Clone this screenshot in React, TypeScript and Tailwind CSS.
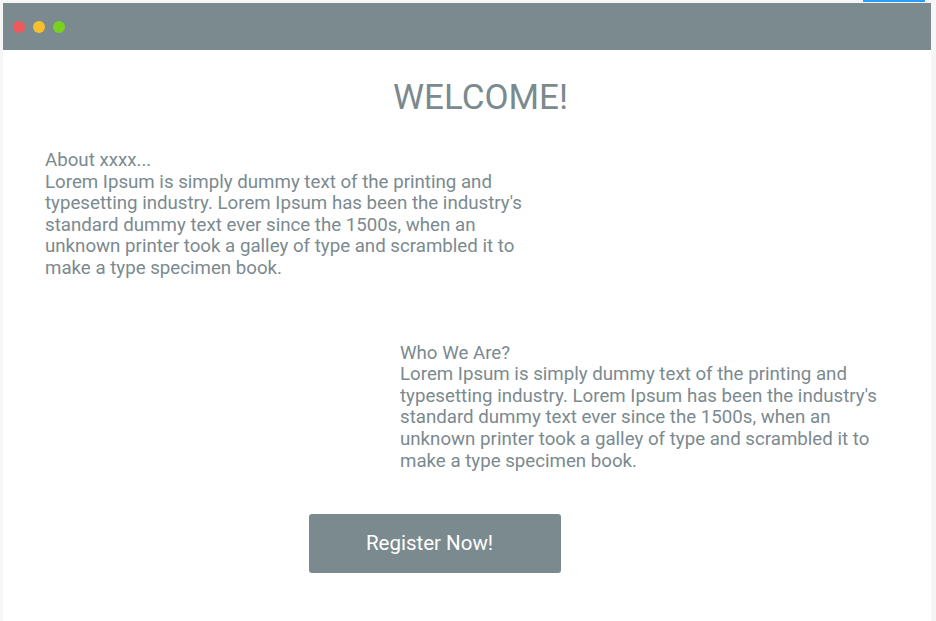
import React from 'react';

const lorem =
  "Lorem Ipsum is simply dummy text of the printing and typesetting industry. Lorem Ipsum has been the industry's standard dummy text ever since the 1500s, when an unknown printer took a galley of type and scrambled it to make a type specimen book.";

function Section({ title, className }: { title: string; className: string }) {
  return (
    <div className={`w-[505px] text-[18.7px] leading-[21.6px] text-[#7b8a8f] ${className}`}>
      <p>{title}</p>
      <p>{lorem}</p>
    </div>
  );
}

export default function App() {
  return (
    <div
      className="relative h-[621px] w-[936px] overflow-hidden bg-[#f6f6f6] pl-[3px] pt-[3px]"
      style={{ fontFamily: 'Roboto, "Liberation Sans", sans-serif' }}
    >
      {/* thin blue highlight at the top edge */}
      <div className="absolute left-[863px] top-0 h-[2px] w-[62px] bg-[#2f9cf3]" />

      <div className="flex h-[618px] w-[928px] flex-col bg-white">
        <div className="flex h-[47px] shrink-0 items-center gap-2 bg-[#7b8a8f] pl-[10px]">
          <span className="h-3 w-3 rounded-full bg-[#f0595b]" />
          <span className="h-3 w-3 rounded-full bg-[#f6c02d]" />
          <span className="h-3 w-3 rounded-full bg-[#78d21f]" />
        </div>

        <h1 className="mt-[27px] pl-[390px] text-[35px] leading-[42px] text-[#7b8a8f]">WELCOME!</h1>

        <Section title="About xxxx..." className="ml-[42px] mt-[31px]" />
        <Section title="Who We Are?" className="ml-[397px] mt-[63px]" />

        <div className="mt-[42px] pl-[306px]">
          <button className="flex h-[59px] w-[252px] items-center justify-center rounded-[3px] bg-[#7b8a8f] pr-[11px] text-[20.5px] text-white">
            Register Now!
          </button>
        </div>
      </div>
    </div>
  );
}
